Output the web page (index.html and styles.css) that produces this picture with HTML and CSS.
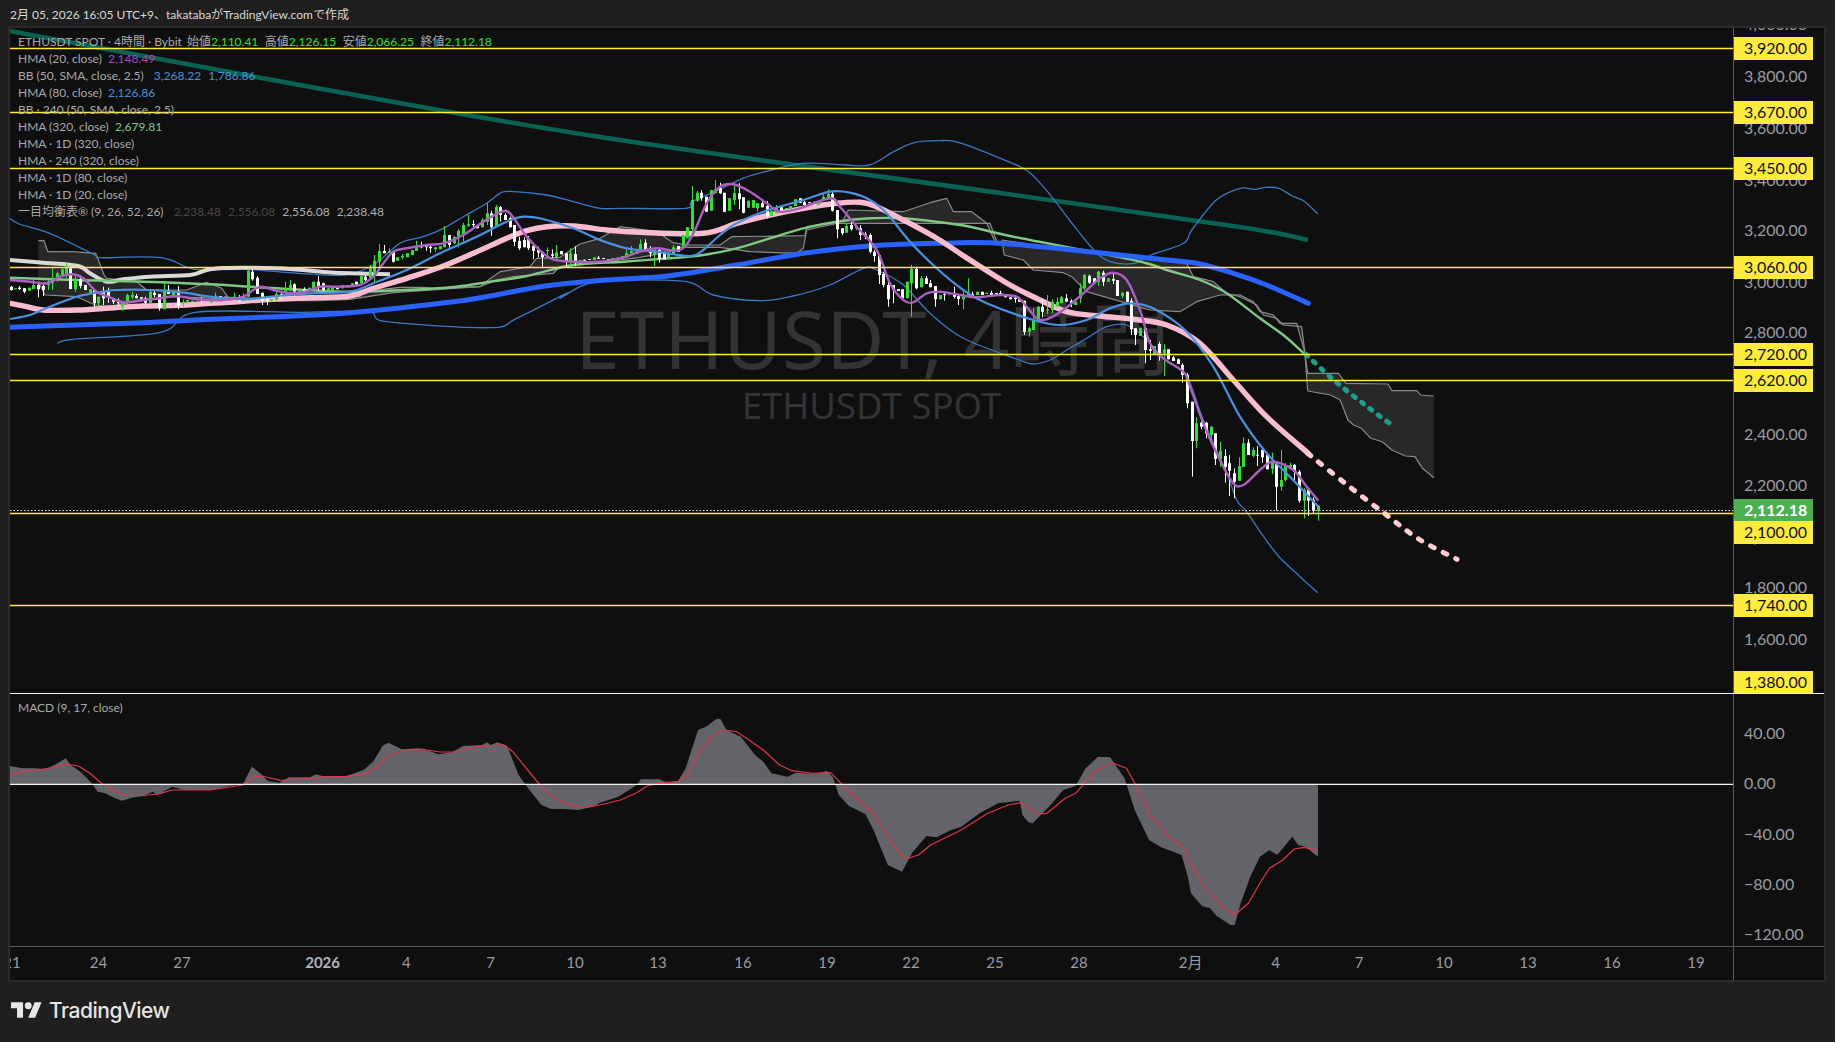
FILE: index.html
```html
<!DOCTYPE html>
<html lang="ja">
<head>
<meta charset="utf-8">
<title>ETHUSDT 4時間</title>
<link rel="stylesheet" href="styles.css">
</head>
<body>
<header class="top">2月 05, 2026 16:05 UTC+9、takatabaがTradingView.comで作成</header>
<main class="frame">
  <section class="pane pane-main">
    <div class="plot">
      <div class="watermark">
        <div class="wm-big">ETHUSDT, 4時間</div>
        <div class="wm-small">ETHUSDT SPOT</div>
      </div>
      <svg id="mainchart" class="chart" viewBox="10 28 1723 665" width="1723" height="665"></svg>
      <div class="legend">
        <div class="row">ETHUSDT SPOT · 4時間 · Bybit <span class="gap">始値<b class="up">2,110.41</b></span><span class="gap">高値<b class="up">2,126.15</b></span><span class="gap">安値<b class="up">2,066.25</b></span><span class="gap">終値<b class="up">2,112.18</b></span></div>
        <div class="row">HMA (20, close) <b class="v tight purple">2,148.49</b></div>
        <div class="row">BB (50, SMA, close, 2.5) <b class="v blue">3,268.22</b><b class="v blue">1,786.86</b></div>
        <div class="row">HMA (80, close) <b class="v tight blue">2,126.86</b></div>
        <div class="row">BB · 240 (50, SMA, close, 2.5)</div>
        <div class="row">HMA (320, close) <b class="v tight green">2,679.81</b></div>
        <div class="row">HMA · 1D (320, close)</div>
        <div class="row">HMA · 240 (320, close)</div>
        <div class="row">HMA · 1D (80, close)</div>
        <div class="row">HMA · 1D (20, close)</div>
        <div class="row">一目均衡表® (9, 26, 52, 26) <b class="v dim">2,238.48</b><b class="v dim">2,556.08</b><b class="v lite">2,556.08</b><b class="v lite">2,238.48</b></div>
      </div>
    </div>
    <div class="axis">
      <span class="tick" style="top:-4px">4,000.00</span>
      <span class="tick" style="top:48.7px">3,800.00</span>
      <span class="tick" style="top:100px">3,600.00</span>
      <span class="tick" style="top:152px">3,400.00</span>
      <span class="tick" style="top:202.7px">3,200.00</span>
      <span class="tick" style="top:254px">3,000.00</span>
      <span class="tick" style="top:304px">2,800.00</span>
      <span class="tick" style="top:355px">2,600.00</span>
      <span class="tick" style="top:406.7px">2,400.00</span>
      <span class="tick" style="top:457.7px">2,200.00</span>
      <span class="tick" style="top:509px">2,000.00</span>
      <span class="tick" style="top:559.7px">1,800.00</span>
      <span class="tick" style="top:611px">1,600.00</span>
      <span class="tag" style="top:20.5px">3,920.00</span>
      <span class="tag" style="top:84.5px">3,670.00</span>
      <span class="tag" style="top:140.5px">3,450.00</span>
      <span class="tag" style="top:239.5px">3,060.00</span>
      <span class="tag" style="top:326.5px">2,720.00</span>
      <span class="tag" style="top:352.5px">2,620.00</span>
      <span class="tag" style="top:504.5px">2,100.00</span>
      <span class="tag" style="top:577.5px">1,740.00</span>
      <span class="tag" style="top:654px">1,380.00</span>
      <span class="tag last" style="top:482px">2,112.18</span>
    </div>
  </section>
  <section class="pane pane-macd">
    <div class="plot">
      <svg id="macdchart" class="chart" viewBox="10 694 1723 252" width="1723" height="252"></svg>
      <div class="legend legend-macd"><div class="row">MACD (9, 17, close)</div></div>
    </div>
    <div class="axis">
      <span class="tick" style="top:39px">40.00</span>
      <span class="tick" style="top:89.5px">0.00</span>
      <span class="tick" style="top:140.5px">−40.00</span>
      <span class="tick" style="top:190.5px">−80.00</span>
      <span class="tick" style="top:240.5px">−120.00</span>
    </div>
  </section>
  <section class="pane pane-time">
    <div class="times">
      <span class="day" style="left:2px">21</span>
      <span class="day" style="left:88.4px">24</span>
      <span class="day" style="left:172px">27</span>
      <span class="day strong" style="left:312.6px">2026</span>
      <span class="day" style="left:396.4px">4</span>
      <span class="day" style="left:480.6px">7</span>
      <span class="day" style="left:565px">10</span>
      <span class="day" style="left:648px">13</span>
      <span class="day" style="left:733px">16</span>
      <span class="day" style="left:817px">19</span>
      <span class="day" style="left:901px">22</span>
      <span class="day" style="left:985px">25</span>
      <span class="day" style="left:1069px">28</span>
      <span class="day" style="left:1180.6px">2月</span>
      <span class="day" style="left:1265.6px">4</span>
      <span class="day" style="left:1349px">7</span>
      <span class="day" style="left:1434px">10</span>
      <span class="day" style="left:1518px">13</span>
      <span class="day" style="left:1602px">16</span>
      <span class="day" style="left:1686px">19</span>
    </div>
    <div class="corner"></div>
  </section>
</main>
<footer class="brand">
  <svg class="logo" viewBox="0 4 36 18" width="31" height="16" aria-hidden="true"><path d="M14 22H7V11H0V4h14v18zM28 22h-8l7.5-18h8L28 22z"/><circle cx="20" cy="8" r="4"/></svg>
  <span class="brand-name">TradingView</span>
</footer>
<script src="chart.js"></script>
</body>
</html>
```
FILE: styles.css
```css
* { box-sizing: border-box; }
html, body { margin: 0; padding: 0; }
body {
  width: 1835px;
  height: 1042px;
  overflow: hidden;
  background: #1f1f1f;
  color: #b4b4b4;
  font-family: "Lato", "Noto Sans CJK JP", sans-serif;
}
.top {
  height: 26px;
  padding-left: 10px;
  font-size: 12px;
  line-height: 29px;
  color: #d8d8d8;
  white-space: nowrap;
}
.frame {
  width: 1818px;
  height: 956px;
  margin-left: 8px;
  border: 2px solid #2a2a2a;
  background: #0f0f0f;
  display: flex;
  flex-direction: column;
}
.pane { display: grid; grid-template-columns: 1723px 91px; }
.pane-main { height: 666px; border-bottom: 1px solid #f2f2f2; }
.pane-macd { height: 253px; border-bottom: 1px solid #555; }
.pane-time { flex: 1; }
.plot { position: relative; overflow: hidden; }
.chart { display: block; position: relative; z-index: 1; }
.axis {
  position: relative;
  overflow: hidden;
  border-left: 1px solid #5a5a5a;
  font-size: 16px;
}
.tick, .tag {
  position: absolute;
  line-height: 21px;
  height: 23px;
  margin-top: -11.5px;
  white-space: nowrap;
}
.tick { left: 10px; color: #9a9ca3; }
.tag {
  left: 0;
  width: 79px;
  padding-left: 10px;
  background: #ffeb3b;
  color: #111;
}
.tag.last { background: #4caf50; color: #fff; font-weight: 700; height: 22px; line-height: 21px; margin-top: -11px; }
.legend {
  position: absolute;
  z-index: 2;
  left: 8px;
  top: 5px;
  font-size: 12px;
  line-height: 17px;
  color: #a9a9a9;
  white-space: nowrap;
}
.legend-macd { top: 5px; }
.row b { font-weight: 400; }
.gap { margin-left: 6.5px; }
.gap:first-of-type { margin-left: 2px; }
.up { color: #2be52b; }
.v { margin-left: 7px; }
.v.tight { margin-left: 3px; }
.purple { color: #ab47bc; }
.blue { color: #4a90d9; }
.green { color: #81c784; }
.dim { color: #474747; }
.lite { color: #b0b0b0; }
.watermark {
  position: absolute;
  z-index: 0;
  left: 0;
  right: 0;
  top: 265px;
  text-align: center;
  color: #333;
  white-space: nowrap;
  font-family: "Noto Sans", "Noto Sans CJK JP", sans-serif;
}
.wm-big { font-size: 80px; line-height: 90px; margin-left: 2px; }
.wm-small { font-size: 36.5px; line-height: 44px; margin-left: 0; }
.pane-time .corner { border-left: 1px solid #5a5a5a; }
.times { position: relative; overflow: hidden; font-size: 15px; color: #9a9ca3; }
.day {
  position: absolute;
  top: 5px;
  line-height: 20px;
  transform: translateX(-50%);
  white-space: nowrap;
}
.day.strong { font-weight: 700; color: #b2b5be; }
.brand {
  display: flex;
  align-items: center;
  gap: 7px;
  height: 60px;
  padding-left: 11px;
  padding-bottom: 4px;
  color: #e6e6e6;
}
.logo { fill: #e6e6e6; display: block; }
.brand-name { font-family: "Inter", sans-serif; font-weight: 500; font-size: 21px; letter-spacing: -0.5px; }
```
FILE: chart.js
```js
// Plots the price and MACD series. Series are stored in the pixel coordinates of the chart canvas.
var NS = 'http://www.w3.org/2000/svg';
var F = {
  z1: [0, 0, 2.613], z8: [0, 200, 2.613], z9: [10, 240, 3], z10: [340, 170, 3], z11: [670, 170, 3],
  z12: [1000, 260, 3], z6: [600, 140, 2.45], z3: [1235, 340, 2.613], z2: [1235, 0, 2.613],
  z4: [0, 680, 2.613], z7: [600, 680, 2.45], z5: [1235, 680, 2.613]
};
function P(f, a) {
  var o = F[f], r = [];
  for (var i = 0; i < a.length; i += 2) r.push([o[0] + a[i] / o[2], o[1] + a[i + 1] / 3]);
  return r;
}
function poly(p) {
  return 'M' + p.map(function (q) { return q[0].toFixed(1) + ' ' + q[1].toFixed(1); }).join('L');
}
function smooth(p) {
  var d = 'M' + p[0][0].toFixed(1) + ' ' + p[0][1].toFixed(1);
  for (var i = 0; i < p.length - 1; i++) {
    var a = p[i - 1] || p[i], b = p[i], c = p[i + 1], e = p[i + 2] || c;
    var k = 1 / 6;
    d += 'C' + (b[0] + (c[0] - a[0]) * k).toFixed(1) + ' ' + (b[1] + (c[1] - a[1]) * k).toFixed(1) + ' ' +
      (c[0] - (e[0] - b[0]) * k).toFixed(1) + ' ' + (c[1] - (e[1] - b[1]) * k).toFixed(1) + ' ' +
      c[0].toFixed(1) + ' ' + c[1].toFixed(1);
  }
  return d;
}
function add(svg, d, attrs) {
  var el = document.createElementNS(NS, 'path');
  el.setAttribute('d', d);
  el.setAttribute('fill', 'none');
  el.setAttribute('stroke-linejoin', 'round');
  for (var k in attrs) el.setAttribute(k, attrs[k]);
  svg.appendChild(el);
}
var main = document.getElementById('mainchart');
var macd = document.getElementById('macdchart');

// Ichimoku clouds
var CLOUD = { fill: '#282828', stroke: 'none' };
var EDGE = { stroke: '#8a8a8a', 'stroke-width': 1.2 };
function cloud(u, l) {
  add(main, poly(u.concat(l.slice().reverse())) + 'Z', CLOUD);
  add(main, poly(u), EDGE);
  add(main, poly(l), EDGE);
}
cloud(
  P('z8', [100,122,115,122,125,155,190,155,250,160,272,225]).concat(P('z9', [290,115,380,125,410,150,530,150,590,127,635,145,655,172])),
  P('z9', [85,125,105,165,200,170,255,195,290,200,470,170,620,175,655,172])
);
cloud(
  P('z9', [655,172,800,178,930,176,1020,168]).concat(P('z10', [60,380,70,365,180,352,250,352,275,355,420,350])),
  P('z9', [655,172,800,182,925,182,1020,178]).concat(P('z10', [160,368,300,358,420,350]))
);
cloud(
  P('z10', [420,350,445,330,480,305,570,290,590,265,660,262,720,222,780,205,840,170,880,175,950,185,1000,218]).concat(
    P('z11', [50,225,150,225,185,200,405,197,410,170,500,155,520,150,535,120,700,125,780,98,830,85,850,125,905,125,950,160,975,215,985,225])),
  P('z10', [420,350,470,330,520,320,640,310,660,290,720,285,900,262]).concat(
    P('z11', [0,245,30,232,150,232,240,245,380,250,400,235,410,180,500,160,960,160,975,200,985,225]))
);
cloud(
  P('z6', [985,300,1210,340,1320,350,1440,372]).concat(P('z12', [560,10,580,50,640,65,680,100,720,110,770,135,790,165,830,175,850,195,905,200,915,280])),
  P('z6', [985,300,990,345]).concat(P('z12', [70,0,100,30,190,38,215,50,260,95,450,150,540,155,590,125,660,105,720,105,760,125,780,155,820,165,840,190,890,190,915,280]))
);
cloud(
  P('z3', [183,43,190,100,270,100,290,130,400,132,410,152,475,152,485,165,520,168]),
  P('z3', [183,43,190,153,250,165,275,180,295,240,310,255,330,265,355,295,385,305,410,330,445,348,470,350,490,385,518,412,520,412])
);

// Down-sloping long average
add(main, smooth([[10, 31], [300, 85], [600, 137], [1000, 193], [1240, 227], [1308, 240]]), { stroke: '#0a6352', 'stroke-width': 4.6 });

// Bollinger bands
var BB = { stroke: '#3a78c4', 'stroke-width': 1.3 };
add(main, smooth(
  P('z1', [26,655,50,672,130,700,248,765,262,773,420,773,510,808,640,808,780,820,900,825])
    .concat(P('z10', [100,285,180,220,250,200,310,175,370,140,440,100,480,70,510,64,620,75,700,95,780,115,850,115]))
    .concat(P('z6', [210,205,225,185,290,150,350,115,420,90,500,70,600,75,660,75,720,35,770,8,830,2,880,8,1000,65,1050,95,1100,160,1150,240,1210,330,1250,365,1310,370,1350,345,1430,310,1450,270,1510,180,1568,145]))
    .concat(P('z2', [50,568,80,562,115,565,150,588,180,603,216,642]))
), BB);
add(main, smooth(
  P('z1', [150,1030,190,1018,420,997,510,937,780,937,960,935,1010,965,1280,983,1350,955,1480,880])
    .concat(P('z10', [660,385,720,350,770,335,850,330]))
    .concat(P('z11', [50,335,130,375,270,392,370,378,480,345,580,295,620,300,700,345,780,430,880,505]))
    .concat(P('z12', [50,297,100,312,150,300,200,270,260,235,320,200,380,195,440,240,490,295,560,350,610,480,680,640,710,720]))
    .concat(P('z3', [30,515,75,590,115,650,170,710,216,758]))
), BB);

// Moving averages behind the candles
add(main, smooth(P('z9', [0,60,100,68,205,78,240,100,290,125,340,118,420,110,540,105,590,90,640,84,720,83,800,85,880,90,940,96,1020,100,1140,103])), { stroke: '#d9d9d9', 'stroke-width': 4 });
var lightGreen = P('z9', [0,113,200,120,400,125,600,133,800,145,1000,155])
  .concat(P('z10', [200,360,350,350,450,335,550,320,700,285,850,275]))
  .concat(P('z11', [0,265,100,255,200,235,300,205,400,175,500,155,600,145,700,145,800,155,900,170,1020,198]))
  .concat(P('z12', [400,0,500,30,600,60,680,100,780,175,850,225,915,283]));
add(main, smooth(lightGreen), { stroke: '#81c784', 'stroke-width': 2.4 });
add(main, smooth(P('z3', [185,43,260,122,340,195,410,255])), { stroke: '#1aa08f', 'stroke-width': 5, 'stroke-dasharray': '2.5 8', 'stroke-linecap': 'round' });
var royal = P('z9', [0,262,200,255,400,248,600,238,800,230,1020,218])
  .concat(P('z10', [380,390,600,350,800,330]))
  .concat(P('z11', [0,317,200,285,400,250,600,228,800,220,1020,222]))
  .concat(P('z12', [500,0,600,12,700,40,800,75,925,130]));
add(main, smooth(royal), { stroke: '#2962ff', 'stroke-width': 5, 'stroke-linecap': 'round' });
var pink = P('z9', [0,190,50,200,100,210,200,210,300,204,400,198,500,196,600,190,700,184,800,177,900,173,1020,168])
  .concat(P('z10', [100,355,200,325,300,292,400,250,500,205,560,182,620,170,700,168,800,180,900,187]))
  .concat(P('z11', [100,190,200,160,300,135,400,115,500,100,570,97,620,110,700,150,800,205,900,270,1020,345]))
  .concat(P('z12', [100,110,200,155,300,168,400,178,500,195,600,250,700,360,800,470,925,580]));
add(main, smooth(pink), { stroke: '#f8bbd0', 'stroke-width': 5.4, 'stroke-linecap': 'round' });
add(main, smooth(P('z3', [190,340,290,432,390,520,480,597,580,658])), { stroke: '#ffcdd2', 'stroke-width': 5, 'stroke-dasharray': '4 10', 'stroke-linecap': 'round' });

// Candles: [x, colour, body top, body bottom, wick high, wick low]
var w = 1, g = 0;
var CANDLES = {
  z9: [[2,w,140,150,138,152],[15,g,145,148],[28,w,143,147,138,150],[42,w,145,155,145,160],[56,g,143,152],[70,g,135,147,118,147],[85,w,135,148,125,172],[99,w,138,150,130,168],[113,g,125,135,120,150],[127,g,115,130,85,150],[141,g,100,118,95,125],[155,g,88,108,85,108],[169,g,85,105,70,115],[181,w,85,147,85,148],[195,g,120,148,105,155],[210,w,118,138,105,145],[225,w,135,150],[239,g,148,160],[253,w,150,190,148,203],[265,g,170,190,170,198],[280,w,155,175,140,195],[295,w,155,172,143,188],[309,w,175,185,175,192],[323,w,180,190,175,196],[337,g,188,200,188,212],[350,g,165,188,162,192],[365,g,165,172,155,178],[379,w,168,175,162,175],[393,w,172,176],[406,w,175,188,170,195],[420,g,155,188,150,188],[433,w,158,165,150,172],[447,w,162,205,162,212],[462,g,150,208,130,208],[475,w,152,162,135,162],[490,g,155,165,150,165],[505,w,155,198,138,208],[518,g,185,190,178,200],[532,g,180,185,180,190],[546,g,182,186],[560,w,178,181],[574,w,178,182,172,190],[602,g,184,187,180,190],[616,g,167,178,158,178],[630,w,168,172],[644,w,170,176],[658,g,172,178],[672,g,170,176,158,176],[686,w,172,184,165,188],[700,g,172,182,160,182],[714,g,92,170,88,170],[727,w,95,118,88,122],[742,w,113,162,108,162],[756,w,158,182,158,195],[770,w,178,182,172,195],[784,g,178,184],[798,g,162,180,155,180],[812,w,162,170,158,178],[826,g,145,155,125,155],[840,g,135,152,120,152],[853,w,133,155,130,170],[868,g,152,158],[882,w,148,152,142,160],[896,g,143,152],[910,g,125,145],[925,w,125,140,108,152],[940,w,130,150,128,155],[953,g,145,152],[967,g,140,152],[981,w,143,148],[995,g,135,145]],
  z10: [[23,g,345,352],[37,g,340,350],[48,w,335,345],[62,g,318,340,315,340],[76,w,320,330,315,335],[90,g,295,325,285,330],[103,g,272,310,255,340],[118,g,243,275,222,300],[132,w,243,250,225,250],[146,g,244,248,235,248],[160,w,245,275,240,278],[172,g,262,272],[187,g,258,262,252,268],[202,g,250,262],[215,g,240,255],[229,g,232,242,212,242],[243,w,228,232,215,235],[257,w,229,232,225,242],[271,w,230,235,225,248],[285,g,232,238,232,245],[299,g,228,238],[313,g,195,232,168,232],[327,w,195,225,195,233],[341,g,200,220,200,222],[355,g,182,200,178,232],[370,g,165,195,158,215],[384,g,163,167,135,170],[398,w,162,165,150,172],[412,w,165,175],[426,g,150,172,145,172],[440,g,130,155,100,165],[454,w,130,172,122,197],[467,g,110,170,105,170],[481,w,112,135,108,155],[495,w,135,150,130,150],[509,w,145,172,140,172],[523,w,165,215,165,228],[537,w,213,235,200,240],[551,w,210,232,202,232],[565,w,207,235,198,240],[579,w,228,242,218,268],[593,w,240,248,230,262],[607,w,245,262,245,295],[621,g,240,243,232,260],[635,w,253,257,238,268],[649,g,247,262,225,270],[663,w,243,253],[677,w,250,275,250,290],[691,g,250,275,235,292],[705,w,252,278,228,288],[719,g,270,275],[733,w,269,272],[747,w,267,270],[761,g,262,270],[775,w,263,267,258,267],[789,w,264,267],[803,w,267,270],[817,g,265,270],[831,g,263,270],[845,g,258,266],[859,g,250,262,238,262],[873,g,243,250,228,250],[887,w,245,252],[901,g,222,245,208,245],[915,w,218,240,208,240],[929,w,238,250,228,262],[943,g,240,255,235,288],[957,w,240,268,235,278],[971,w,245,268],[985,g,248,265]],
  z11: [[10,g,232,250,225,252],[24,w,228,245],[38,g,195,232],[52,g,172,205],[67,g,90,178,48,195],[80,g,68,92,62,95],[94,w,68,85,60,92],[108,w,80,125],[122,g,60,122],[136,g,58,70,30,70],[150,w,55,70,38,72],[163,w,68,125],[178,g,85,122],[192,g,70,90,40,105],[206,w,70,88,40,118],[220,w,82,128,82,130],[234,g,92,113],[248,g,90,113],[262,g,100,115,100,125],[277,w,100,112,93,112],[290,w,108,138,93,145],[304,g,122,138],[318,g,112,130,105,130],[332,w,112,122],[347,g,114,118],[361,g,108,118],[375,g,88,108],[389,w,85,98],[403,w,97,105,93,105],[417,w,97,100],[431,w,95,105],[445,g,93,105],[459,g,80,92,73,92],[473,g,72,88,58,88],[487,w,72,122,65,125],[500,w,120,178,120,205],[515,w,175,190,175,195],[529,g,168,188,162,188],[543,w,165,178,155,182],[557,g,171,175,168,180],[571,w,175,195,165,210],[585,w,193,197,185,208],[599,w,195,245,190,250],[613,w,245,258,240,275],[626,w,255,315,255,342],[640,w,312,345,305,352],[655,w,345,388,335,410],[669,w,345,360,345,400],[683,w,358,363],[697,w,358,385],[710,g,335,385],[724,g,297,340,285,440],[739,w,297,355,292,358],[753,g,325,352,318,352],[767,w,325,342,318,342],[781,w,340,352,330,352],[796,w,348,388,348,410],[809,g,375,388],[823,w,371,374,365,392],[838,w,370,373],[851,w,368,380,350,385],[865,w,378,387,372,405],[880,g,380,388,365,418],[893,g,368,380,325,380],[907,w,372,378,365,378],[921,g,365,375],[935,w,365,375],[949,g,368,372],[963,w,368,375,362,375],[977,w,369,372],[991,w,369,372,362,372]],
  z12: [[16,w,108,112],[30,w,112,118],[44,w,114,117,110,128],[58,w,118,125,112,125],[72,w,122,215,122,225],[86,g,205,215,200,230],[100,g,180,210,145,210],[113,g,140,185,138,185],[127,w,140,155,118,172],[142,g,148,152,105,162],[155,g,125,150,118,160],[170,g,125,140,112,142],[184,g,112,130,108,130],[197,w,115,125,102,125],[212,w,122,130,118,142],[226,g,125,135,118,135],[239,g,85,115,70,130],[253,g,45,85,42,85],[267,w,47,68,44,72],[281,w,55,70],[295,g,35,65,32,78],[310,w,38,65,32,78],[323,g,55,65],[338,w,57,62,42,72],[352,w,60,108],[365,g,98,108,95,115],[380,w,95,125],[394,w,122,208,115,225],[406,w,205,225,205,255],[421,g,203,228],[436,w,205,270,205,310],[449,w,268,272,240,300],[463,g,258,285],[477,w,252,280,245,302],[491,g,268,280,252,348],[505,w,268,298],[520,w,292,303,288,303],[533,w,298,312,295,312],[547,w,315,345,310,368],[561,w,345,430,340,445],[575,w,425,543,425,650],[589,g,490,543,472,565],[604,w,488,500,475,508],[618,w,488,520,485,535],[632,g,500,525,498,540],[646,w,520,597,520,615],[660,g,572,598,545,620],[674,w,588,620,568,668],[688,w,610,632,585,708],[702,w,640,665,625,715],[716,g,618,662,592,662],[730,g,550,620,532,620],[745,w,548,585,538,585],[758,g,570,587,562,592],[772,w,584,587,558,618],[787,w,570,592,562,608],[800,w,585,628,578,628],[815,g,605,627,578,642],[829,w,610,680,610,752],[842,g,660,680,570,692],[856,g,615,660,610,665],[870,g,615,628,608,628],[883,w,615,635,612,660],[897,w,635,722,630,728],[912,g,690,722,685,775],[925,w,690,722,685,768],[940,w,720,752,712,760],[955,g,737,752,735,782]]
};
var paths = { 1: { wick: '', body: '' }, 0: { wick: '', body: '' } };
Object.keys(CANDLES).forEach(function (f) {
  var o = F[f];
  CANDLES[f].forEach(function (c) {
    var x = Math.round(o[0] + c[0] / o[2]) + 0.5;
    var t = o[1] + c[2] / 3, b = Math.max(o[1] + c[3] / 3, t + 1);
    var h = c[4] === undefined ? t : o[1] + c[4] / 3, l = c[5] === undefined ? b : o[1] + c[5] / 3;
    var p = paths[c[1]];
    p.wick += 'M' + x + ' ' + h.toFixed(1) + 'V' + l.toFixed(1);
    p.body += 'M' + x + ' ' + t.toFixed(1) + 'V' + b.toFixed(1);
  });
});
[[0, '#2be52b'], [1, '#ffffff']].forEach(function (e) {
  add(main, paths[e[0]].wick, { stroke: e[1], 'stroke-width': 1 });
  add(main, paths[e[0]].body, { stroke: e[1], 'stroke-width': 3 });
});

// Moving averages above the candles
var sky = P('z9', [0,237,60,225,120,200,200,170,280,155,320,150,420,150,520,158,600,170,700,178,800,168,900,160,1020,155])
  .concat(P('z10', [100,340,200,300,300,250,400,205,500,155,550,140,600,145,700,175,780,210,860,235,950,245]))
  .concat(P('z11', [60,258,100,240,150,195,200,160,280,125,400,90,480,65,540,68,600,90,650,130,720,215,800,295,880,360,950,400]))
  .concat(P('z12', [100,180,180,195,260,180,330,145,390,130,460,145,560,215,640,320,720,470,800,580,870,650,955,740]));
add(main, smooth(sky), { stroke: '#4a90e2', 'stroke-width': 2.2 });
var purple = P('z9', [0,120,60,125,110,130,150,110,190,103,220,115,260,155,300,172,340,187,400,180,450,175,500,168,560,178,640,180,700,170,730,150,755,140,790,150,830,158,880,157,930,140,980,140])
  .concat(P('z10', [60,345,100,320,130,280,160,245,200,235,260,225,310,220,370,195,430,155,480,127,510,130,560,200,610,250,640,268,700,275,780,275,850,262,900,245,950,235]))
  .concat(P('z11', [30,240,70,190,110,100,150,50,190,43,240,65,290,100,330,125,390,115,480,85,510,110,560,170,620,240,660,340,700,390,730,397,770,370,810,365,870,375,920,382]))
  .concat(P('z12', [0,105,50,110,80,140,110,175,140,178,190,150,250,100,300,55,340,38,380,60,420,150,450,250,490,295,550,335,565,365,610,490,660,600,700,670,730,675,780,630,820,605,880,630,920,680,955,722]));
add(main, smooth(purple), { stroke: '#ab5fc0', 'stroke-width': 2.4 });

// Horizontal levels
[48.5, 112.5, 168.5, 267.5, 354.5, 380.5, 513.5, 605.5].forEach(function (y) {
  add(main, 'M10 ' + y + 'H1733', { stroke: '#ffeb3b', 'stroke-width': 1.3 });
});
add(main, 'M10 510.5H1733', { stroke: '#e8e8e8', 'stroke-width': 1, 'stroke-dasharray': '1.5 2' });

// MACD pane
var ZERO = 784.4;
var hist = P('z4', [26,258,60,265,90,265,120,268,150,250,172,235,185,255,210,275,240,310,255,335,275,340,295,352,318,362,350,352,375,348,400,335,410,345,450,320,480,330,550,330,590,320,635,312,658,260,680,280,700,303,730,308,755,292,810,292,825,283,850,290,900,290,950,270,975,245,1000,197,1015,188,1050,208,1090,205,1120,212,1145,223,1180,217,1210,198,1260,195,1272,187,1282,195,1300,187,1325,197,1355,285,1380,325,1415,375,1440,387,1475,387,1510,390,1550,380])
  .concat(P('z7', [0,368,45,350,90,315,100,298,145,298,165,308,190,305,210,265,240,150,260,140,285,117,295,117,310,150,345,170,380,225,400,245,420,280,460,290,480,278,530,283,555,272,570,290,585,345,610,378,650,402,670,450,705,555,740,575,765,518,800,468,825,472,860,450,885,440,930,400,975,370,1028,362,1035,405,1050,427,1060,430,1100,380,1135,330,1165,318,1190,265,1220,230,1250,232,1285,295,1310,390,1345,480,1375,502,1425,525,1440,590,1448,640,1475,678,1495,685,1510,707,1545,735,1555,735]))
  .concat(P('z5', [15,670,40,590,65,530,90,510,110,525,125,505,150,470,165,495,185,500,205,520,217,530]));
var last = hist[hist.length - 1][0];
add(macd, poly(hist) + 'L' + last + ' ' + ZERO + 'L10 ' + ZERO + 'Z', { fill: '#63646a', stroke: 'none' });
var signal = P('z4', [26,285,50,275,100,270,140,262,175,252,205,258,235,280,265,310,320,345,350,348,390,345,420,340,450,330,550,330,635,315,665,290,685,288,735,302,760,297,810,295,850,290,900,290,950,283,985,260,1015,228,1050,213,1100,207,1150,216,1190,216,1225,205,1270,198,1315,195,1340,215,1400,300,1440,350,1480,370,1525,382])
  .concat(P('z7', [0,375,50,360,90,338,115,318,150,308,190,305,215,285,240,220,275,170,300,150,335,155,365,180,400,210,440,255,470,272,520,280,565,278,610,335,670,400,715,490,750,537,780,525,810,495,885,450,950,400,1000,375,1030,368,1070,402,1095,400,1140,355,1165,340,1215,272,1255,248,1290,265,1310,310,1350,410,1380,455,1430,505,1445,545,1480,620,1530,685,1555,705]))
  .concat(P('z5', [35,670,65,610,90,565,125,540,155,507,180,502,217,512]));
add(macd, poly(signal), { stroke: '#e0354b', 'stroke-width': 1.2 });
add(macd, 'M10 ' + ZERO + 'H1733', { stroke: '#f2f2f2', 'stroke-width': 1.3 });
```
